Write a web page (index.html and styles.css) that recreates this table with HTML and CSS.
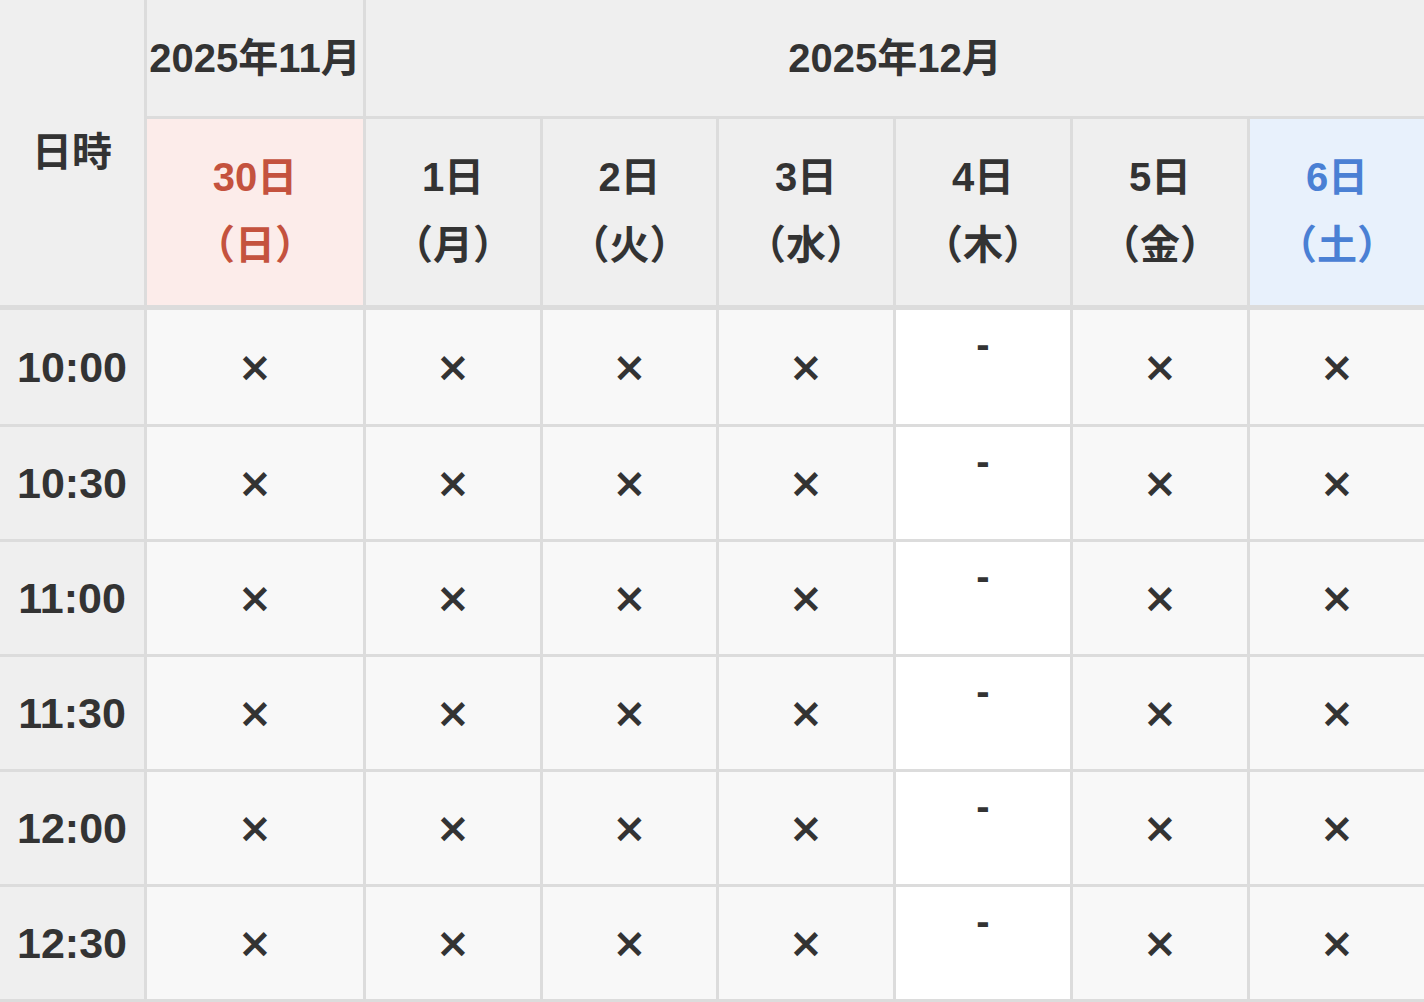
FILE: index.html
```html
<!DOCTYPE html>
<html lang="ja">
<head>
<meta charset="utf-8">
<title>予約カレンダー</title>
<link rel="stylesheet" href="styles.css">
</head>
<body>
<table class="cal">
  <colgroup>
    <col class="c-time">
    <col class="c-first">
    <col class="c-day">
    <col class="c-day2">
    <col class="c-day">
    <col class="c-day">
    <col class="c-day">
    <col class="c-day">
  </colgroup>
  <thead>
    <tr class="r-month">
      <th class="corner" rowspan="2">日時</th>
      <th class="month">2025年11月</th>
      <th class="month" colspan="6">2025年12月</th>
    </tr>
    <tr class="r-day">
      <th class="day sun">30日<br><span class="wd">（日）</span></th>
      <th class="day">1日<br><span class="wd">（月）</span></th>
      <th class="day">2日<br><span class="wd">（火）</span></th>
      <th class="day">3日<br><span class="wd">（水）</span></th>
      <th class="day">4日<br><span class="wd">（木）</span></th>
      <th class="day">5日<br><span class="wd">（金）</span></th>
      <th class="day sat">6日<br><span class="wd">（土）</span></th>
    </tr>
  </thead>
  <tbody>
    <tr class="r-first">
      <th class="time">10:00</th>
      <td class="mark">×</td><td class="mark">×</td><td class="mark">×</td><td class="mark">×</td>
      <td class="none">-</td>
      <td class="mark">×</td><td class="mark">×</td>
    </tr>
    <tr>
      <th class="time">10:30</th>
      <td class="mark">×</td><td class="mark">×</td><td class="mark">×</td><td class="mark">×</td>
      <td class="none">-</td>
      <td class="mark">×</td><td class="mark">×</td>
    </tr>
    <tr>
      <th class="time">11:00</th>
      <td class="mark">×</td><td class="mark">×</td><td class="mark">×</td><td class="mark">×</td>
      <td class="none">-</td>
      <td class="mark">×</td><td class="mark">×</td>
    </tr>
    <tr>
      <th class="time">11:30</th>
      <td class="mark">×</td><td class="mark">×</td><td class="mark">×</td><td class="mark">×</td>
      <td class="none">-</td>
      <td class="mark">×</td><td class="mark">×</td>
    </tr>
    <tr>
      <th class="time">12:00</th>
      <td class="mark">×</td><td class="mark">×</td><td class="mark">×</td><td class="mark">×</td>
      <td class="none">-</td>
      <td class="mark">×</td><td class="mark">×</td>
    </tr>
    <tr>
      <th class="time">12:30</th>
      <td class="mark">×</td><td class="mark">×</td><td class="mark">×</td><td class="mark">×</td>
      <td class="none">-</td>
      <td class="mark">×</td><td class="mark">×</td>
    </tr>
  </tbody>
</table>
</body>
</html>
```

FILE: styles.css
```css
html, body {
  margin: 0;
  padding: 0;
  background: #ffffff;
  overflow: hidden;
}

.cal {
  border-collapse: separate;
  border-spacing: 0;
  table-layout: fixed;
  width: 1427px;
  font-family: "Liberation Sans", "Noto Sans CJK JP", sans-serif;
  font-size: 40px;
  font-weight: 700;
  color: #333333;
}

.c-time { width: 147px; }
.c-first { width: 219px; }
.c-day { width: 177px; }
.c-day2 { width: 176px; }

.cal th,
.cal td {
  box-sizing: border-box;
  padding: 0;
  text-align: center;
  vertical-align: middle;
  white-space: nowrap;
  border-right: 3px solid #dcdcdc;
  border-bottom: 3px solid #dcdcdc;
  background: #f8f8f8;
}

.cal th {
  background: #efefef;
  font-weight: 700;
}

.r-month { height: 119px; }
.cal .month {
  height: 119px;
  padding-bottom: 7px;
}

.r-day .day {
  height: 191px;
  border-bottom-width: 5px;
  line-height: 65px;
  padding-bottom: 1px;
}
.cal .corner {
  border-bottom-width: 5px;
  padding-bottom: 8px;
}

.wd {
  font-family: "Noto Sans CJK JP", sans-serif;
}

.day.sun { background: #fcecea; color: #c4523e; }
.day.sat { background: #e8f1fc; color: #4a80d4; }

tbody tr { height: 115px; }
tbody tr.r-first { height: 117px; }

.cal .time {
  font-size: 43px;
}

.mark {
  font-family: "DejaVu Sans", sans-serif;
  font-weight: 700;
  font-size: 41px;
}

.cal td.none {
  background: #ffffff;
  vertical-align: top;
  padding-top: 12px;
  font-weight: 700;
  font-size: 40px;
}
```
